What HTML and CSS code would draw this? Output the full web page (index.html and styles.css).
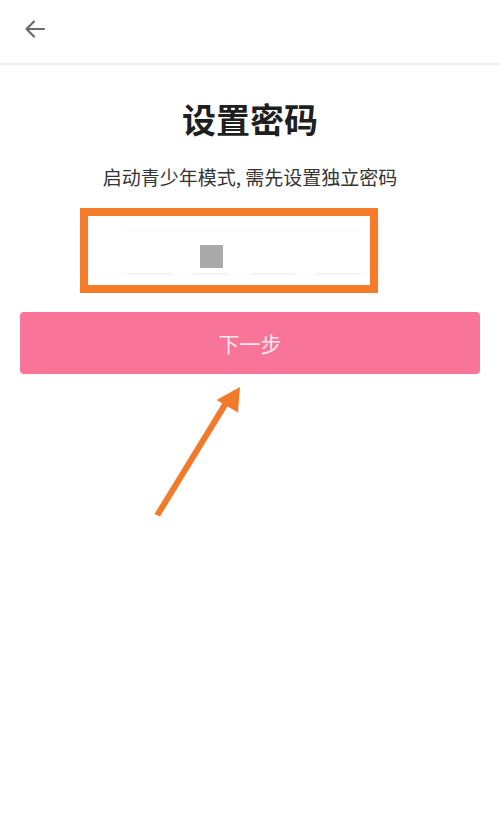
FILE: index.html
```html
<!DOCTYPE html>
<html lang="zh">
<head>
<meta charset="utf-8">
<link rel="stylesheet" href="styles.css">
</head>
<body>
<div class="page">
  <header class="header">
    <svg class="back" width="24" height="24" viewBox="0 0 24 24">
      <path d="M21 12H4M11 4.5L3.5 12L11 19.5" fill="none" stroke="#6b6b6b" stroke-width="2.2" stroke-linecap="round" stroke-linejoin="round"/>
    </svg>
  </header>
  <main class="main">
    <h1 class="title">设置密码</h1>
    <p class="subtitle">启动青少年模式, 需先设置独立密码</p>
    <div class="mark">
      <div class="code">
        <div class="cell"></div>
        <div class="cell"><span class="cursor"></span></div>
        <div class="cell"></div>
        <div class="cell"></div>
      </div>
    </div>
    <button class="next">下一步</button>
  </main>
  <svg class="arrow" width="500" height="827" viewBox="0 0 500 827">
    <path d="M154.5 514 L160 516.5 L229 404 L224 400.5 Z" fill="#f47a2b"/>
    <path d="M240 387 L216.5 400 L238 412.5 Z" fill="#f47a2b"/>
  </svg>
</div>
</body>
</html>
```
FILE: styles.css
```css
html, body {
  margin: 0;
  padding: 0;
  background: #ffffff;
}
body {
  font-family: "Noto Sans CJK SC", "Noto Sans", sans-serif;
  width: 500px;
  height: 827px;
  overflow: hidden;
}
.page {
  position: relative;
  width: 500px;
  height: 827px;
}
.header {
  height: 65px;
  border-bottom: 2px solid #ededed;
  box-sizing: border-box;
  display: flex;
  align-items: center;
  padding-left: 23px;
  padding-bottom: 6px;
}
.back {
  display: block;
}
.main {
  display: flex;
  flex-direction: column;
  align-items: center;
}
.title {
  margin: 32px 0 0;
  font-size: 34px;
  line-height: 44px;
  font-weight: 700;
  color: #1f1f1f;
}
.subtitle {
  margin: 23px 0 0;
  font-size: 19px;
  line-height: 26px;
  color: #333333;
}
.mark {
  align-self: flex-start;
  margin: 18px 0 0 80px;
  width: 298px;
  height: 85px;
  box-sizing: border-box;
  border: 8px solid #f47b2a;
  display: flex;
  padding: 14px 0 0 34px;
  overflow: hidden;
}
.code {
  display: flex;
  gap: 21px;
  height: 45px;
  padding-left: 5px;
  border-top: 1px solid #f8f8f8;
  box-sizing: border-box;
}
.cell {
  width: 45px;
  height: 44px;
  border-bottom: 2px solid #f5f5f5;
  box-sizing: border-box;
  display: flex;
  align-items: center;
  justify-content: center;
}
.cell:nth-child(2) {
  width: 36px;
}
.cursor {
  display: block;
  width: 23px;
  height: 23px;
  background: #aaaaaa;
  margin-top: 9px;
}
.next {
  margin-top: 19px;
  width: 460px;
  height: 62px;
  border: none;
  border-radius: 4px;
  background: #f87498;
  color: #fde8ee;
  font-family: "Noto Sans CJK SC", "Noto Sans", sans-serif;
  font-size: 21px;
  padding: 0;
}
.arrow {
  position: absolute;
  left: 0;
  top: 0;
  pointer-events: none;
}
```
